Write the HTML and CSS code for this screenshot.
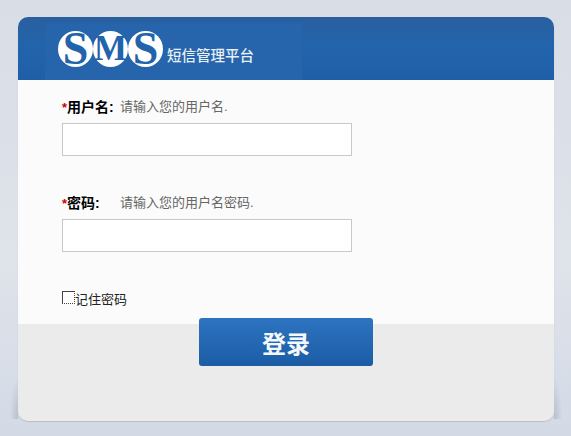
FILE: index.html
```html
<!DOCTYPE html>
<html>
<head>
<meta charset="utf-8">
<title>短信管理平台</title>
<link rel="stylesheet" href="styles.css">
</head>
<body>
<div class="login-box">
    <div class="header">
        <div class="logo-panel">
            <div class="logo-mark">
                <span class="logo-letter">S</span>
                <span class="logo-letter logo-letter-m">M</span>
                <span class="logo-letter">S</span>
            </div>
            <div class="logo-title">短信管理平台</div>
        </div>
    </div>

    <div class="form-area">
        <div class="field">
            <div class="field-label">
                <span class="label-name"><span class="required">*</span>用户名:</span>
                <span class="label-hint">请输入您的用户名.</span>
            </div>
            <input class="text-input" type="text" id="userName">
        </div>

        <div class="field">
            <div class="field-label">
                <span class="label-name"><span class="required">*</span>密码:</span>
                <span class="label-hint">请输入您的用户名密码.</span>
            </div>
            <input class="text-input" type="password" id="password">
        </div>

        <div class="remember">
            <span class="check-box"></span>记住密码
        </div>
    </div>

    <div class="footer">
        <button class="login-button">登录</button>
    </div>
</div>
</body>
</html>
```

FILE: styles.css
```css
html, body {
    height: 100%;
}
body {
    margin: 0;
    overflow: hidden;
    font-family: "Liberation Sans", "Noto Sans CJK SC", sans-serif;
    background: linear-gradient(to bottom, #d8dde6 0%, #dfe3ea 60%, #d3dae6 100%);
}
.login-box {
    position: relative;
    width: 536px;
    height: 404px;
    margin: 0 0 0 18px;
    top: 17px;
    display: flex;
    flex-direction: column;
    border-radius: 10px;
    box-shadow: 0 1px 1px #b9bdc4;
}
/* soft drop shadows behind the bottom corners */
.login-box::before,
.login-box::after {
    content: "";
    position: absolute;
    z-index: -1;
    bottom: 2px;
    width: 12px;
    height: 44px;
}
.login-box::before {
    left: -12px;
    background: radial-gradient(ellipse 8px 42px at 100% 100%, rgba(150, 155, 170, 0.45), rgba(150, 155, 170, 0));
}
.login-box::after {
    right: -12px;
    background: radial-gradient(ellipse 8px 42px at 0 100%, rgba(150, 155, 170, 0.45), rgba(150, 155, 170, 0));
}
.header {
    height: 63px;
    flex: none;
    padding-left: 27px;
    border-radius: 10px 10px 0 0;
    background: linear-gradient(to bottom, #2a5f9f 0%, #2264ab 45%, #1f5fa8 100%);
}
.logo-panel {
    width: 257px;
    height: 57px;
    margin-top: 6px;
    display: flex;
    align-items: flex-start;
    background: #2665ab;
}
.logo-mark {
    display: flex;
    margin: 8px 0 0 13px;
}
.logo-letter {
    width: 35px;
    height: 36px;
    border-radius: 50%;
    background: #fff;
    color: #2264ab;
    font-family: "Liberation Serif", serif;
    font-weight: bold;
    font-size: 46px;
    line-height: 36px;
    text-align: center;
}
.logo-letter-m {
    font-size: 35px;
}
.logo-title {
    margin: 23px 0 0 4px;
    color: #e8eff7;
    font-size: 14.5px;
    font-weight: 500;
    line-height: 20px;
    white-space: nowrap;
}
.form-area {
    height: 244px;
    flex: none;
    box-sizing: border-box;
    padding: 18px 0 0 44px;
    background: #fbfbfb;
}
.field {
    height: 96px;
}
.field-label {
    display: flex;
    height: 18px;
    margin-bottom: 7px;
    font-size: 13px;
    line-height: 18px;
}
.label-name {
    width: 58px;
    font-weight: bold;
    font-size: 14px;
    color: #000;
}
.required {
    color: #c00;
    font-size: 13px;
}
.label-hint {
    color: #666;
}
.text-input {
    display: block;
    box-sizing: border-box;
    width: 290px;
    height: 33px;
    padding: 0 4px;
    background: #fff;
    border: 1px solid #c8c8c8;
}
.remember {
    display: flex;
    align-items: center;
    height: 16px;
    font-size: 13px;
    color: #222;
}
.check-box {
    width: 11px;
    height: 11px;
    margin-bottom: 1px;
    background: #fff;
    border: 1px solid #444;
    border-right-style: dotted;
    border-bottom-style: dotted;
}
.footer {
    flex: 1;
    display: flex;
    justify-content: center;
    align-items: flex-start;
    border-radius: 0 0 10px 10px;
    background: #ebebeb;
}
.login-button {
    width: 174px;
    height: 48px;
    margin: -6px 0 0 0;
    padding: 0;
    border: 0;
    border-radius: 3px;
    background: linear-gradient(to bottom, #2d74c0 0%, #1c5ca5 100%);
    color: #f4f8fc;
    font-family: "Noto Sans CJK SC", sans-serif;
    font-weight: bold;
    font-size: 24px;
    cursor: pointer;
}
```
